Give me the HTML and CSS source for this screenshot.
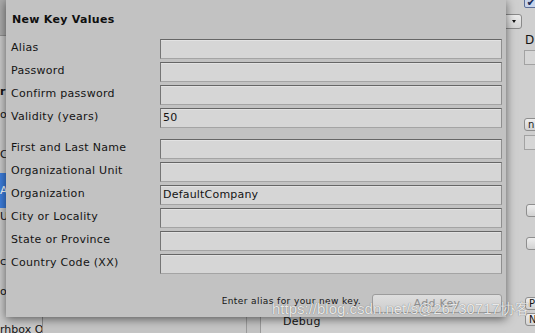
FILE: index.html
```html
<!DOCTYPE html>
<html lang="en">
<head>
  <meta charset="UTF-8">
  <title>Create a new key</title>
  <link rel="stylesheet" href="styles.css">
</head>
<body>
  <div class="editor">
    <div class="hierarchy">
      <div class="toolbar"></div>
      <div class="tree-item header">r</div>
      <div class="tree-item">o</div>
      <div class="tree-item after-gap">C</div>
      <div class="tree-item selected">A</div>
      <div class="tree-item short">U</div>
      <div class="tree-item lower">c</div>
      <div class="tree-item near">o</div>
      <div class="tree-item last">rhbox O</div>
    </div>

    <div class="project"></div>
    <div class="splitter"></div>

    <div class="inspector">
      <div class="insp-main">
        <div class="dropdown"><span class="arrow"></span></div>
        <div class="insp-label">Debug</div>
      </div>
      <div class="insp-side">
        <div class="checkbox">&#10004;</div>
        <div class="side-label">D</div>
        <div class="side-box"></div>
        <div class="mini-btn btn-n">n</div>
        <div class="side-box tight"></div>
        <div class="mini-btn btn-a"></div>
        <div class="mini-btn btn-b"></div>
        <div class="mini-btn btn-p">P</div>
        <div class="mini-btn btn-next">N</div>
      </div>
    </div>
  </div>

  <div class="dialog">
    <h2 class="dialog-title">New Key Values</h2>

    <div class="form-group">
      <label>Alias</label><div class="field"></div>
      <label>Password</label><div class="field"></div>
      <label>Confirm password</label><div class="field"></div>
      <label>Validity (years)</label><div class="field">50</div>
    </div>

    <div class="form-group second">
      <label>First and Last Name</label><div class="field"></div>
      <label>Organizational Unit</label><div class="field"></div>
      <label>Organization</label><div class="field">DefaultCompany</div>
      <label>City or Locality</label><div class="field"></div>
      <label>State or Province</label><div class="field"></div>
      <label>Country Code (XX)</label><div class="field"></div>
    </div>

    <div class="dialog-footer">
      <span class="hint">Enter alias for your new key.</span>
      <button type="button" class="add-key" disabled>Add Key</button>
    </div>
  </div>

  <div class="watermark">https://blog.csdn.net/s@26730717协客</div>
</body>
</html>
```

FILE: styles.css
```css
* {
  box-sizing: border-box;
}

body {
  margin: 0;
  width: 535px;
  height: 333px;
  overflow: hidden;
  position: relative;
  font-family: "DejaVu Sans", "Liberation Sans", sans-serif;
  font-size: 11px;
  color: #141414;
  background-color: #c2c2c2;
}

.editor {
  display: flex;
  height: 100%;
}

/* hierarchy panel, mostly hidden behind the dialog */
.hierarchy {
  width: 43px;
  background-color: #c9c9c9;
  border-right: 1px solid #8c8c8c;
  overflow: hidden;
}

.toolbar {
  height: 36px;
  background-color: #a9a9a9;
  border-bottom: 1px solid #8e8e8e;
}

.tree-item {
  height: 23px;
  line-height: 23px;
  white-space: nowrap;
}

.tree-item.header {
  margin-top: 44px;
  font-weight: bold;
}

.tree-item.after-gap {
  margin-top: 17px;
}

.tree-item.selected {
  margin-top: 7px;
  height: 35px;
  line-height: 35px;
  color: #ffffff;
  background-color: #3d7ddb;
}

.tree-item.short {
  height: 18px;
  line-height: 18px;
}

.tree-item.lower {
  margin-top: 24px;
}

.tree-item.near {
  margin-top: 7px;
}

.tree-item.last {
  margin-top: 15px;
}

.project {
  width: 203px;
  background-color: #c4c4c4;
}

.splitter {
  width: 15px;
  background-color: #c2c2c2;
  border-left: 1px solid #9a9a9a;
  border-right: 1px solid #9a9a9a;
}

/* inspector on the right */
.inspector {
  flex: 1;
  display: flex;
  background-color: #cfcfcf;
}

.insp-main {
  flex: 1;
  display: flex;
  flex-direction: column;
  align-items: flex-end;
}

.dropdown {
  position: relative;
  margin-top: 14px;
  margin-right: 1px;
  width: 90px;
  height: 15px;
  border: 1px solid #8a8a8a;
  border-radius: 3px;
  background: linear-gradient(#ececec, #d4d4d4);
}

.dropdown .arrow {
  position: absolute;
  right: 5px;
  top: 5px;
  border-left: 2px solid transparent;
  border-right: 2px solid transparent;
  border-top: 3px solid #111;
}

.insp-label {
  align-self: flex-start;
  margin-top: 286px;
  padding-left: 22px;
  line-height: 14px;
  letter-spacing: 0.3px;
}

.insp-side {
  width: 12px;
}

.checkbox {
  margin-top: -6px;
  margin-left: 1px;
  width: 14px;
  height: 14px;
  line-height: 16px;
  text-align: center;
  font-size: 11px;
  color: #1b2c5a;
  background-color: #c8d4ea;
  border: 1px solid #5d6f98;
  border-radius: 2px;
}

.side-label {
  margin-top: 25px;
  padding-left: 2px;
  line-height: 14px;
  font-size: 12px;
}

.side-box {
  margin-top: 3px;
  margin-left: 1px;
  width: 30px;
  height: 15px;
  background-color: #d6d6d6;
  border: 1px solid #a2a2a2;
}

.side-box.tight {
  margin-top: 4px;
}

.mini-btn {
  margin-left: 1px;
  width: 30px;
  height: 13px;
  line-height: 12px;
  padding-left: 3px;
  font-size: 10px;
  border: 1px solid #8e8e8e;
  border-radius: 3px;
  background: linear-gradient(#eeeeee, #d2d2d2);
}

.btn-n {
  margin-top: 53px;
}

.btn-a {
  margin-top: 54px;
  margin-left: 3px;
}

.btn-b {
  margin-top: 20px;
  margin-left: 3px;
}

.btn-p {
  margin-top: 47px;
  margin-left: 2px;
}

.btn-next {
  margin-top: 3px;
  margin-left: 2px;
}

/* the floating key dialog */
.dialog {
  position: absolute;
  left: 6px;
  top: 0;
  width: 500px;
  height: 317px;
  padding: 0 4px 0 5px;
  background-color: #c2c2c2;
  box-shadow: 0 2px 9px rgba(0, 0, 0, 0.55);
}

.dialog-title {
  margin: 0;
  height: 39px;
  line-height: 39px;
  padding-left: 1px;
  font-size: 11px;
  font-weight: bold;
  letter-spacing: 0.3px;
  color: #0f0f0f;
}

.form-group {
  display: grid;
  grid-template-columns: 149px 342px;
  grid-auto-rows: 20px;
  row-gap: 3px;
}

.form-group.second {
  margin-top: 11px;
}

.form-group label {
  line-height: 17px;
  white-space: nowrap;
  letter-spacing: 0.3px;
}

.field {
  height: 20px;
  line-height: 18px;
  padding-left: 2px;
  letter-spacing: 0.2px;
  background-color: #d6d6d6;
  border: 1px solid #8e8e8e;
  border-top-color: #666666;
  border-left-color: #757575;
  border-bottom-color: #a4a4a4;
  box-shadow: inset 0 1px 0 #e2e2e2;
}

.dialog-footer {
  display: flex;
  justify-content: flex-end;
  align-items: flex-start;
  gap: 11px;
  margin-top: 20px;
}

.hint {
  line-height: 14px;
  font-size: 9px;
  letter-spacing: 0.4px;
}

.add-key {
  width: 130px;
  height: 19px;
  padding: 0;
  font-family: inherit;
  font-size: 11px;
  letter-spacing: 0.3px;
  color: #8e8e8e;
  background: linear-gradient(#dedede, #cdcdcd);
  border: 1px solid #9c9c9c;
  border-radius: 3px;
}

.watermark {
  position: absolute;
  left: 272px;
  top: 300px;
  white-space: nowrap;
  font-family: "Liberation Sans", Arial, sans-serif;
  font-size: 15px;
  color: rgba(255, 255, 255, 0.85);
  text-shadow: 0 0 1px rgba(0, 0, 0, 0.55);
}
```
